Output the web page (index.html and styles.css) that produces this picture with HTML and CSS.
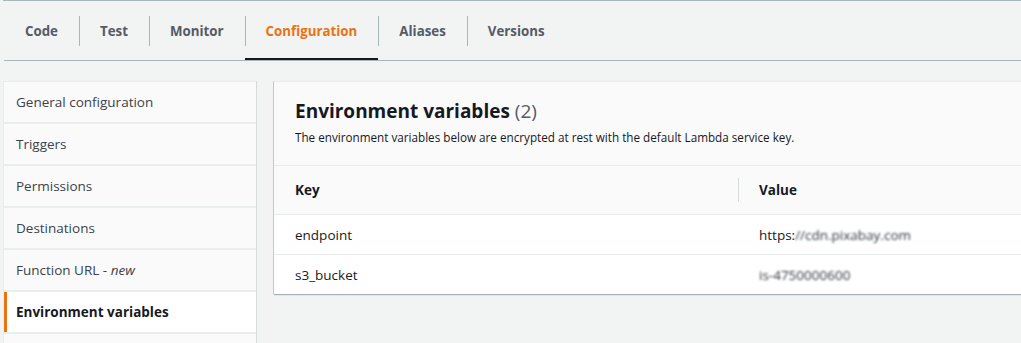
FILE: index.html
```html
<!DOCTYPE html>
<html lang="en">
<head>
    <meta charset="UTF-8">
    <title>Lambda - Configuration</title>
    <link rel="stylesheet" href="styles.css">
</head>
<body>

    <div class="top-edge"></div>

    <nav class="tabs">
        <a class="tab">Code</a>
        <a class="tab">Test</a>
        <a class="tab">Monitor</a>
        <a class="tab active">Configuration</a>
        <a class="tab">Aliases</a>
        <a class="tab">Versions</a>
    </nav>

    <div class="layout">
        <ul class="side-nav">
            <li>General configuration</li>
            <li>Triggers</li>
            <li>Permissions</li>
            <li>Destinations</li>
            <li>Function URL - <em>new</em></li>
            <li class="active">Environment variables</li>
            <li></li>
        </ul>

        <section class="panel">
            <header class="panel-header">
                <h2>Environment variables <span class="count">(2)</span></h2>
                <p>The environment variables below are encrypted at rest with the default Lambda service key.</p>
            </header>

            <table class="env-table">
                <thead>
                    <tr>
                        <th class="key-col">Key</th>
                        <th class="value-col"><span class="divider"></span>Value</th>
                    </tr>
                </thead>
                <tbody>
                    <tr>
                        <td>endpoint</td>
                        <td class="value-col">https:<span class="masked">//cdn.pixabay.com</span></td>
                    </tr>
                    <tr>
                        <td>s3_bucket</td>
                        <td class="value-col"><span class="masked">is-4750000600</span></td>
                    </tr>
                </tbody>
            </table>
        </section>
    </div>

</body>
</html>
```

FILE: styles.css
```css
body {
    margin: 0;
    background: #f2f3f3;
    font-family: 'Open Sans', 'Liberation Sans', sans-serif;
    color: #16191f;
    overflow: hidden;
    height: 343px;
}

.top-edge {
    height: 1px;
    margin-left: 3px;
    background: #aab7b8;
}

/* Top tabs */
.tabs {
    display: flex;
    margin-left: 4px;
    height: 59px;
    border-bottom: 1px solid #aab7b8;
}

.tab {
    position: relative;
    display: flex;
    align-items: center;
    padding: 2px 21px 0;
    font-size: 13.3px;
    font-weight: 700;
    color: #545b64;
    border-bottom: 2px solid transparent;
    box-sizing: border-box;
}

.tab + .tab::before {
    content: "";
    position: absolute;
    left: 0;
    top: 15px;
    height: 30px;
    border-left: 1px solid #aab7b8;
}

.tab.active {
    color: #ec7211;
    border-bottom-color: #16191f;
}

/* Layout */
.layout {
    display: flex;
    gap: 18px;
    padding: 20px 0 0 4px;
    width: 1140px;
}

.side-nav {
    list-style: none;
    margin: 0;
    padding: 0;
    width: 252px;
    flex: 0 0 252px;
    background: #fafafa;
    border-top: 1px solid #eaeded;
    box-shadow: 1px 0 0 #d5dbdb, -1px 0 0 #eaeded;
}

.side-nav li {
    height: 40px;
    line-height: 40px;
    padding-left: 12px;
    font-size: 13.5px;
    color: #3b424b;
    border-bottom: 2px solid #eaeded;
}

.side-nav li.active {
    background: #fff;
    font-weight: 700;
    color: #16191f;
    box-shadow: inset 3px 0 0 #ec7211;
}

/* Panel */
.panel {
    flex: 1;
    background: #fff;
    border-top: 1px solid #eaeded;
    box-shadow: 0 1px 1px 0 rgba(0, 28, 36, 0.3), -1px 0 0 rgba(0, 28, 36, 0.15);
    align-self: flex-start;
}

.panel-header {
    background: #fafafa;
    padding: 16px 21px 0;
    height: 67px;
    border-bottom: 1px solid #eaeded;
}

.panel-header h2 {
    margin: 0;
    font-size: 19px;
    font-weight: 700;
    line-height: 26px;
}

.panel-header .count {
    font-weight: 400;
    color: #545b64;
}

.panel-header p {
    margin: 5px 0 0;
    font-size: 11.7px;
    line-height: 16px;
}

.env-table {
    width: 100%;
    border-collapse: collapse;
    font-size: 13.5px;
}

.env-table th {
    height: 48px;
    text-align: left;
    font-weight: 700;
    background: #fafafa;
    border-bottom: 1px solid #eaeded;
    padding: 0 21px;
}

.env-table td {
    height: 39px;
    padding: 0 21px;
    border-bottom: 1px solid #eaeded;
}

.env-table tbody tr:last-child td {
    border-bottom: none;
}

.env-table .key-col {
    width: 422px;
}

.env-table .value-col {
    position: relative;
}

.divider {
    position: absolute;
    left: 0;
    top: 12px;
    height: 24px;
    border-left: 1px solid #d5dbdb;
}

.masked {
    filter: blur(0.9px);
    color: #33373d;
}
```
